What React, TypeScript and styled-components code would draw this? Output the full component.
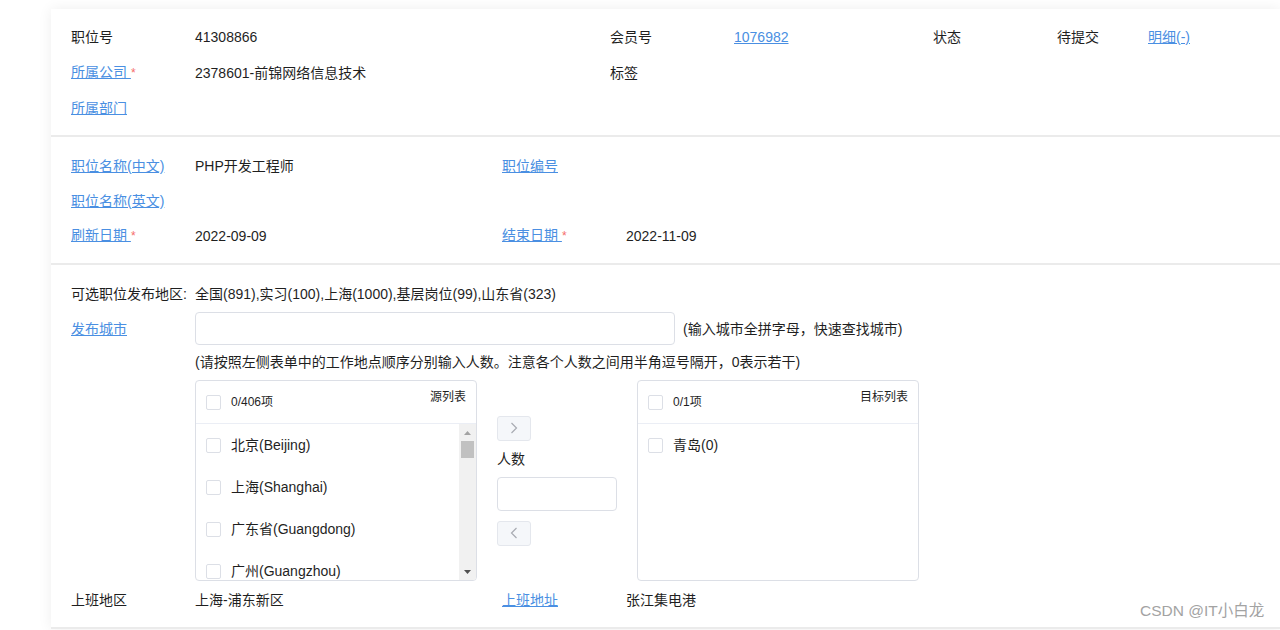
import styled, { createGlobalStyle } from 'styled-components';

const GlobalStyle = createGlobalStyle`
  html, body {
    margin: 0;
    padding: 0;
    background: #fff;
  }
  body {
    font-family: "Liberation Sans", Arial, "Noto Sans CJK SC", sans-serif;
    font-size: 14px;
    color: #1f1f1f;
  }
  * {
    box-sizing: border-box;
  }
`;

const sourceCities = [
  '北京(Beijing)', '上海(Shanghai)', '广东省(Guangdong)', '广州(Guangzhou)', '深圳(Shenzhen)',
  '天津(Tianjin)', '重庆(Chongqing)', '江苏省(Jiangsu)',
];

const Chevron = ({ dir }: { dir: 'left' | 'right' }) => (
  <svg width="8" height="12" viewBox="0 0 8 12" fill="none">
    <path
      d={dir === 'right' ? 'M1.5 1 L6.5 6 L1.5 11' : 'M6.5 1 L1.5 6 L6.5 11'}
      stroke="#a8abb2"
      strokeWidth="1.2"
    />
  </svg>
);

const Arrow = ({ dir }: { dir: 'up' | 'down' }) => (
  <svg width="7" height="4" viewBox="0 0 7 4">
    <path
      d={dir === 'up' ? 'M0 4 L3.5 0 L7 4 Z' : 'M0 0 L3.5 4 L7 0 Z'}
      fill={dir === 'up' ? '#a3a3a3' : '#505050'}
    />
  </svg>
);

export default function App() {
  return (
    <Page>
      <GlobalStyle />
      <Panel>
        <Section $pad="10.5px 20px 9px">
          <FieldRow $cols="124px 415px 124px 199px 124px 91px auto" $h={35.5}>
            <span>职位号</span>
            <span>41308866</span>
            <span>会员号</span>
            <span><LinkText>1076982</LinkText></span>
            <span>状态</span>
            <span>待提交</span>
            <span><LinkText>明细(-)</LinkText></span>
          </FieldRow>
          <FieldRow $cols="124px 415px 124px 199px 124px 91px auto" $h={35.5}>
            <span><LinkText>所属公司&nbsp;</LinkText><Required>*</Required></span>
            <span>2378601-前锦网络信息技术</span>
            <span>标签</span>
          </FieldRow>
          <FieldRow $cols="124px 415px 124px 199px 124px 91px auto" $h={35.5}>
            <span><LinkText>所属部门</LinkText></span>
          </FieldRow>
        </Section>

        <Section $pad="11px 20px 10px">
          <FieldRow $cols="124px 307px 124px auto" $h={35}>
            <span><LinkText>职位名称(中文)</LinkText></span>
            <span>PHP开发工程师</span>
            <span><LinkText>职位编号</LinkText></span>
          </FieldRow>
          <FieldRow $cols="124px 307px 124px auto" $h={35}>
            <span><LinkText>职位名称(英文)</LinkText></span>
          </FieldRow>
          <FieldRow $cols="124px 307px 124px auto" $h={35}>
            <span><LinkText>刷新日期&nbsp;</LinkText><Required>*</Required></span>
            <span>2022-09-09</span>
            <span><LinkText>结束日期&nbsp;</LinkText><Required>*</Required></span>
            <span>2022-11-09</span>
          </FieldRow>
        </Section>

        <Section $pad="19px 20px 17px">
          <FormRow>
            <span>可选职位发布地区:</span>
            <span>全国(891),实习(100),上海(1000),基层岗位(99),山东省(323)</span>
          </FormRow>
          <FormRow $mt={8}>
            <span><LinkText>发布城市</LinkText></span>
            <InputLine>
              <CityInput />
              <Hint>(输入城市全拼字母，快速查找城市)</Hint>
            </InputLine>
          </FormRow>
          <FormRow $mt={7}>
            <span />
            <span>(请按照左侧表单中的工作地点顺序分别输入人数。注意各个人数之间用半角逗号隔开，0表示若干)</span>
          </FormRow>
          <FormRow $mt={8}>
            <span />
            <Transfer>
              <TransferPanel>
                <PanelHeader>
                  <Check />
                  <Count>0/406项</Count>
                  <PanelTitle>源列表</PanelTitle>
                </PanelHeader>
                <ListBody>
                  <Items>
                    {sourceCities.map((c) => (
                      <Item key={c}>
                        <Check />
                        <ItemText>{c}</ItemText>
                      </Item>
                    ))}
                  </Items>
                  <ScrollTrack>
                    <ScrollArrow><Arrow dir="up" /></ScrollArrow>
                    <ScrollThumb />
                    <ScrollSpace />
                    <ScrollArrow><Arrow dir="down" /></ScrollArrow>
                  </ScrollTrack>
                </ListBody>
              </TransferPanel>

              <Middle>
                <MoveButton type="button"><Chevron dir="right" /></MoveButton>
                <MiddleLabel>人数</MiddleLabel>
                <CountInput />
                <MoveButton type="button" $mt={10}><Chevron dir="left" /></MoveButton>
              </Middle>

              <TransferPanel>
                <PanelHeader>
                  <Check />
                  <Count>0/1项</Count>
                  <PanelTitle>目标列表</PanelTitle>
                </PanelHeader>
                <ListBody>
                  <Items>
                    <Item>
                      <Check />
                      <ItemText>青岛(0)</ItemText>
                    </Item>
                  </Items>
                </ListBody>
              </TransferPanel>
            </Transfer>
          </FormRow>
          <FieldRow $cols="124px 307px 124px auto" $h={20} $mt={9}>
            <span>上班地区</span>
            <span>上海-浦东新区</span>
            <span><LinkText>上班地址</LinkText></span>
            <span>张江集电港</span>
          </FieldRow>
        </Section>
      </Panel>
      <Watermark>CSDN @IT小白龙</Watermark>
    </Page>
  );
}

const Page = styled.div`
  position: relative;
  height: 630px;
  padding: 9px 0 0 51px;
  overflow: hidden;
`;

const Panel = styled.div`
  background: #fff;
  box-shadow: 0 0 13px rgba(0, 0, 0, 0.07);
`;

const Section = styled.section<{ $pad: string }>`
  padding: ${(p) => p.$pad};
  border-bottom: 2px solid #ebebeb;
`;

const FieldRow = styled.div<{ $cols: string; $h: number; $mt?: number }>`
  display: grid;
  grid-template-columns: ${(p) => p.$cols};
  height: ${(p) => p.$h}px;
  margin-top: ${(p) => p.$mt ?? 0}px;
  align-items: center;
  line-height: 20px;
  white-space: nowrap;
`;

const FormRow = styled.div<{ $mt?: number }>`
  display: grid;
  grid-template-columns: 124px 1fr;
  align-items: center;
  margin-top: ${(p) => p.$mt ?? 0}px;
  line-height: 20px;
  white-space: nowrap;
`;

const LinkText = styled.a`
  color: #4a8fe2;
  text-decoration: underline;
  cursor: pointer;
`;

const Required = styled.span`
  color: #f56c6c;
  font-size: 12px;
`;

const InputLine = styled.div`
  display: flex;
  align-items: center;
`;

const CityInput = styled.input`
  width: 480px;
  height: 33px;
  border: 1px solid #dcdfe6;
  border-radius: 4px;
  outline: none;
  padding: 0 10px;
`;

const Hint = styled.span`
  margin-left: 8px;
`;

const Transfer = styled.div`
  display: flex;
  align-items: center;
  gap: 20px;
`;

const TransferPanel = styled.div`
  width: 282px;
  height: 201px;
  border: 1px solid #dcdfe6;
  border-radius: 4px;
  display: flex;
  flex-direction: column;
  overflow: hidden;
  background: #fff;
`;

const PanelHeader = styled.div`
  flex: none;
  height: 43px;
  display: flex;
  align-items: center;
  padding: 0 10px;
  border-bottom: 1px solid #ebeef5;
`;

const Check = styled.span`
  flex: none;
  width: 15px;
  height: 15px;
  border: 1px solid #dcdfe6;
  border-radius: 2px;
  background: #fff;
`;

const Count = styled.span`
  margin-left: 10px;
  font-size: 12px;
  color: #1f1f1f;
`;

const PanelTitle = styled.span`
  margin-left: auto;
  align-self: flex-start;
  margin-top: 8px;
  font-size: 12px;
  line-height: 16px;
`;

const ListBody = styled.div`
  flex: 1;
  min-height: 0;
  display: flex;
`;

const Items = styled.div`
  flex: 1;
  overflow: hidden;
`;

const Item = styled.div`
  height: 42px;
  display: flex;
  align-items: center;
  padding-left: 10px;
`;

const ItemText = styled.span`
  margin-left: 10px;
  font-size: 14px;
  white-space: nowrap;
`;

const ScrollTrack = styled.div`
  flex: none;
  width: 17px;
  background: #f1f1f1;
  display: flex;
  flex-direction: column;
  align-items: center;
`;

const ScrollArrow = styled.div`
  flex: none;
  width: 17px;
  height: 17px;
  display: flex;
  align-items: center;
  justify-content: center;
`;

const ScrollThumb = styled.div`
  flex: none;
  width: 13px;
  height: 17px;
  background: #c1c1c1;
`;

const ScrollSpace = styled.div`
  flex: 1;
`;

const Middle = styled.div`
  width: 120px;
  display: flex;
  flex-direction: column;
  align-items: flex-start;
`;

const MoveButton = styled.button<{ $mt?: number }>`
  width: 34px;
  height: 25px;
  margin-top: ${(p) => p.$mt ?? 0}px;
  padding: 0;
  border: 1px solid #e4e7ed;
  border-radius: 3px;
  background: #f5f7fa;
  display: flex;
  align-items: center;
  justify-content: center;
`;

const MiddleLabel = styled.span`
  margin: 8px 0;
  line-height: 20px;
`;

const CountInput = styled.input`
  width: 120px;
  height: 34px;
  border: 1px solid #dcdfe6;
  border-radius: 4px;
  outline: none;
`;

const Watermark = styled.div`
  position: absolute;
  left: 1140px;
  top: 601px;
  font-size: 15.5px;
  line-height: 20px;
  color: #a3a3a3;
  white-space: nowrap;
`;
